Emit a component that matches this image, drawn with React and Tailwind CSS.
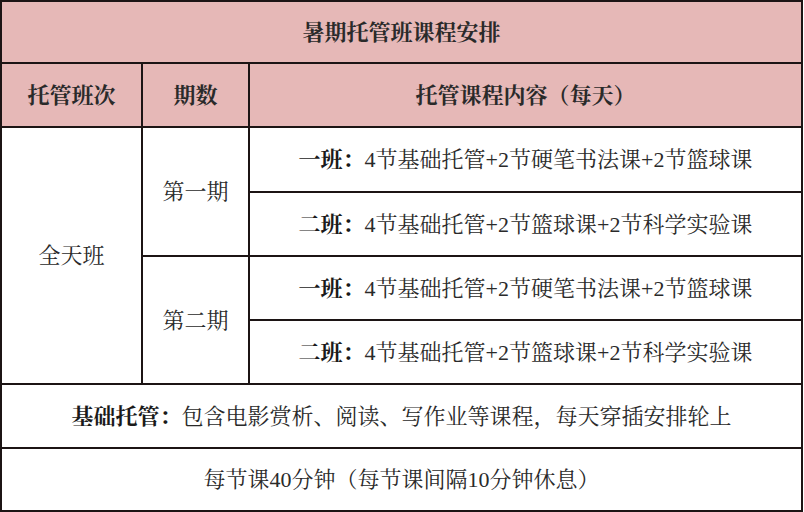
import React from "react";

const font = {
  fontFamily:
    '"Liberation Serif", "Noto Serif CJK SC", "Noto Sans CJK SC", serif',
};

function Cell({ className = "", children }) {
  return (
    <div
      className={`flex items-center justify-center text-[22px] text-[#2a2a2a] ${className}`}
    >
      {children}
    </div>
  );
}

function Content({ label, text }) {
  return (
    <span className="whitespace-nowrap">
      <b className="font-bold text-[#1a1a1a]">{label}</b>
      {text}
    </span>
  );
}

export default function App() {
  return (
    <div lang="zh-CN" className="w-[804px] h-[512px] bg-white" style={font}>
      <div className="grid w-[803px] grid-cols-[139px_105px_551px] grid-rows-[60px_62px_63px_62px_62px_62px_62px_61px] gap-[2px] bg-[#1c1414] p-[2px]">
        <Cell className="col-span-3 col-start-1 row-start-1 bg-[#e6b8b7] font-bold text-[#1a1a1a]">
          暑期托管班课程安排
        </Cell>
        <Cell className="col-start-1 row-start-2 bg-[#e6b8b7] font-bold text-[#1a1a1a]">
          托管班次
        </Cell>
        <Cell className="col-start-2 row-start-2 bg-[#e6b8b7] font-bold text-[#1a1a1a]">
          期数
        </Cell>
        <Cell className="col-start-3 row-start-2 bg-[#e6b8b7] font-bold text-[#1a1a1a]">
          托管课程内容（每天）
        </Cell>

        <Cell className="col-start-1 row-start-3 row-span-4 bg-white">全天班</Cell>
        <Cell className="col-start-2 row-start-3 row-span-2 bg-white">第一期</Cell>
        <Cell className="col-start-2 row-start-5 row-span-2 bg-white">第二期</Cell>

        <Cell className="col-start-3 row-start-3 bg-white">
          <Content label="一班：" text="4节基础托管+2节硬笔书法课+2节篮球课" />
        </Cell>
        <Cell className="col-start-3 row-start-4 bg-white">
          <Content label="二班：" text="4节基础托管+2节篮球课+2节科学实验课" />
        </Cell>
        <Cell className="col-start-3 row-start-5 bg-white">
          <Content label="一班：" text="4节基础托管+2节硬笔书法课+2节篮球课" />
        </Cell>
        <Cell className="col-start-3 row-start-6 bg-white">
          <Content label="二班：" text="4节基础托管+2节篮球课+2节科学实验课" />
        </Cell>

        <Cell className="col-span-3 col-start-1 row-start-7 bg-white">
          <Content
            label="基础托管："
            text="包含电影赏析、阅读、写作业等课程，每天穿插安排轮上"
          />
        </Cell>
        <Cell className="col-span-3 col-start-1 row-start-8 bg-white">
          每节课40分钟（每节课间隔10分钟休息）
        </Cell>
      </div>
    </div>
  );
}
